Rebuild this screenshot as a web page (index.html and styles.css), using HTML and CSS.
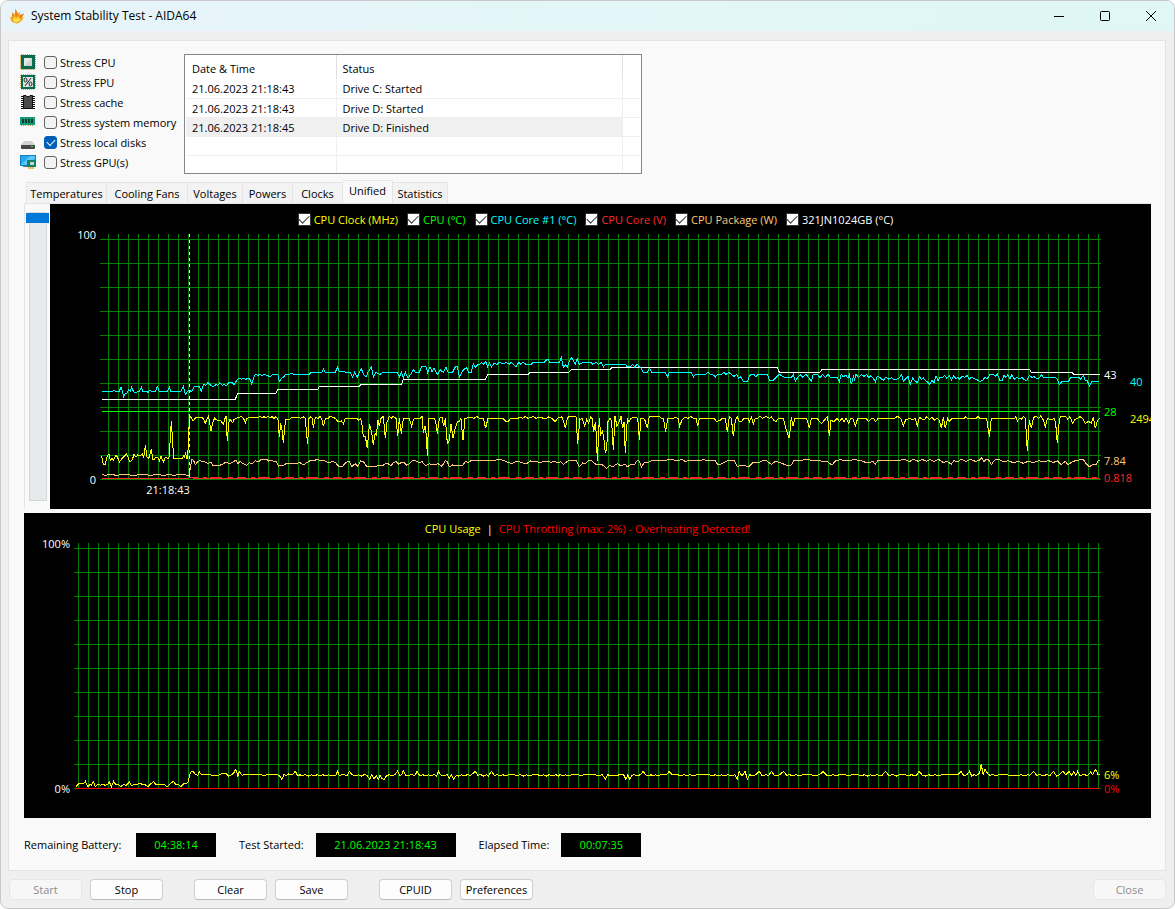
FILE: index.html
```html
<!DOCTYPE html>
<html lang="en">
<head>
<meta charset="utf-8">
<title>System Stability Test - AIDA64</title>
<link rel="stylesheet" href="styles.css">
</head>
<body>
<div class="window">
  <header class="titlebar">
    <svg class="app-icon" viewBox="0 0 16 16" aria-hidden="true">
      <path fill="#f9a51a" d="M5.500 15 C2 14 1 11 1.500 8.500 L3.500 9.500 L2.800 4 L5.500 6.800 L6.500 1 L9 6 L11 3.500 L11 7 L15 5.500 L13.200 9 L14.500 10 C13 13 10 15.500 7.500 15.500 Z"/>
      <path fill="#ef7d1a" d="M6.500 1 L9 6 L8 9 L6 6.500 Z M15 5.500 L13.200 9 L10 10.500 L11 7 Z M2.800 4 L5 7.500 L4.500 10 L3.500 9.500 Z"/>
      <path fill="#ffe04a" d="M5 14 C3.500 12 4 10.500 5.500 8.500 L7 11 L10 8.500 L10 11 L12 10.500 C11 13 8.500 14.500 6.500 14.500 Z"/>
    </svg>
    <h1 class="title">System Stability Test - AIDA64</h1>
    <div class="window-controls">
      <button class="winbtn" aria-label="Minimize"><svg viewBox="0 0 12 12"><path d="M1 6.500H11"/></svg></button>
      <button class="winbtn" aria-label="Maximize"><svg viewBox="0 0 12 12"><rect x="1.500" y="1.500" width="9" height="9" rx="1"/></svg></button>
      <button class="winbtn" aria-label="Close window"><svg viewBox="0 0 12 12"><path d="M1 1L11 11M11 1L1 11"/></svg></button>
    </div>
  </header>

  <main class="panel">
    <div class="setup">
      <div class="stress">
        <div class="stress-row">
          <svg class="icon" viewBox="0 0 16 16"><rect x="1" y="1" width="14" height="14" fill="#0b6b50" stroke="#d9a94a" stroke-width="1" stroke-dasharray="1 1"/><rect x="1" y="1" width="14" height="14" fill="#0b6b50"/><path d="M1 0.500H15M1 15.500H15M0.500 1V15M15.500 1V15" stroke="#d9a94a" stroke-dasharray="1 1"/><rect x="4" y="4" width="8" height="8" fill="#e4e8e6"/><path d="M4 12L12 4V12Z" fill="#cfd4d2"/></svg>
          <input class="check" type="checkbox" id="s1"><label for="s1">Stress CPU</label>
        </div>
        <div class="stress-row">
          <svg class="icon" viewBox="0 0 16 16"><rect x="1" y="1" width="14" height="14" fill="#0b6b50"/><path d="M1 0.500H15M1 15.500H15M0.500 1V15M15.500 1V15" stroke="#d9a94a" stroke-dasharray="1 1"/><rect x="3" y="3" width="10" height="10" fill="#dfe5e2"/><path d="M11 4L5 12" stroke="#222" stroke-width="1"/><ellipse cx="5.500" cy="6" rx="1.500" ry="2" fill="none" stroke="#222"/><ellipse cx="10.500" cy="10" rx="1.500" ry="2" fill="none" stroke="#222"/></svg>
          <input class="check" type="checkbox" id="s2"><label for="s2">Stress FPU</label>
        </div>
        <div class="stress-row">
          <svg class="icon" viewBox="0 0 16 16"><path d="M1 2.500H15M1 4.500H15M1 6.500H15M1 8.500H15M1 10.500H15M1 12.500H15M1 14.500H15" stroke="#111"/><path d="M3.500 1.500H6L7 2.500H9L10 1.500H12.500V14.500H3.500Z" fill="#4b4b4b" stroke="#111"/></svg>
          <input class="check" type="checkbox" id="s3"><label for="s3">Stress cache</label>
        </div>
        <div class="stress-row">
          <svg class="icon" viewBox="0 0 16 16"><path d="M0 3H15V11H0Z" fill="#149a76"/><path d="M2 5H4V9H2ZM5 5H7V9H5ZM8 5H10V9H8ZM11 5H13V9H11Z" fill="#173a30"/><path d="M1 11.500H7M8 11.500H14" stroke="#b69a3f" stroke-width="1" stroke-dasharray="1 1"/></svg>
          <input class="check" type="checkbox" id="s4"><label for="s4">Stress system memory</label>
        </div>
        <div class="stress-row">
          <svg class="icon" viewBox="0 0 16 16"><path d="M4 7H12L15 11H1Z" fill="#d2d2d2"/><path d="M1 11H15V14Q15 15 14 15H2Q1 15 1 14Z" fill="#474747"/><rect x="11" y="12" width="2" height="1" fill="#42e04a"/></svg>
          <input class="check" type="checkbox" id="s5" checked><label for="s5">Stress local disks</label>
        </div>
        <div class="stress-row">
          <svg class="icon" viewBox="0 0 16 16"><rect x="0.500" y="1.500" width="15" height="10" fill="#2aa9ea" stroke="#0e7fc0"/><path d="M1 11L10 2H15V4L8 11Z" fill="#5cc8f7"/><path d="M3 13H8V12H3Z" fill="#56747f"/><rect x="7" y="6" width="9" height="7" fill="#128267"/><rect x="10" y="8" width="4" height="3" fill="#c5d6cf"/><path d="M9 13V15M11 13V15M13 13V15" stroke="#f0a52a" stroke-width="1.500"/></svg>
          <input class="check" type="checkbox" id="s6"><label for="s6">Stress GPU(s)</label>
        </div>
      </div>

      <div class="log">
        <table>
          <thead><tr><th class="col-date">Date &amp; Time</th><th class="col-status">Status</th><th></th></tr></thead>
          <tbody>
            <tr><td>21.06.2023 21:18:43</td><td>Drive C: Started</td><td></td></tr>
            <tr><td>21.06.2023 21:18:43</td><td>Drive D: Started</td><td></td></tr>
            <tr class="selected"><td>21.06.2023 21:18:45</td><td>Drive D: Finished</td><td></td></tr>
            <tr><td></td><td></td><td></td></tr>
            <tr><td></td><td></td><td></td></tr>
          </tbody>
        </table>
      </div>
    </div>

    <nav class="tabs" role="tablist">
      <button class="tab large" role="tab">Temperatures</button>
      <button class="tab large" role="tab">Cooling Fans</button>
      <button class="tab medium" role="tab">Voltages</button>
      <button class="tab" role="tab">Powers</button>
      <button class="tab" role="tab">Clocks</button>
      <button class="tab active" role="tab" aria-selected="true">Unified</button>
      <button class="tab medium" role="tab">Statistics</button>
    </nav>

    <section class="tabpage">
      <div class="slider"><input class="range" type="range" min="0" max="100" value="0" aria-label="Graph scale"></div>
      <div class="graph">
        <div class="legend">
          <label class="yellow"><input class="square" type="checkbox" checked>CPU Clock (MHz)</label>
          <label class="green"><input class="square" type="checkbox" checked>CPU (°C)</label>
          <label class="cyan"><input class="square" type="checkbox" checked>CPU Core #1 (°C)</label>
          <label class="red"><input class="square" type="checkbox" checked>CPU Core (V)</label>
          <label class="peach"><input class="square" type="checkbox" checked>CPU Package (W)</label>
          <label class="white"><input class="square" type="checkbox" checked>321JN1024GB (°C)</label>
        </div>
        <svg class="plot" viewBox="50 230 1101 279" role="img" aria-label="Sensor graph">
          <defs>
            <pattern id="cols" x="108" y="0" width="10" height="10" patternUnits="userSpaceOnUse"><rect width="1" height="10" fill="#008000"/></pattern>
            <pattern id="rows" x="0" y="239" width="24" height="24" patternUnits="userSpaceOnUse"><rect width="24" height="1" fill="#008000"/></pattern>
          </defs>
          <rect x="102" y="234" width="998" height="246" fill="url(#cols)"/>
          <rect x="100" y="239" width="1001" height="241" fill="url(#rows)"/>
          <path class="trace lime" d="M102 411.500H1100"/>
          <path class="trace crimson" d="M102 478.500H189M193 478.500H1100"/>
          <path class="trace crimson" stroke-dasharray="9 5 4 3 12 6 5 4" d="M189 477.500H1100"/>
          <g transform="translate(100 370) scale(.33333)">
            <polyline class="trace peachline" points="6,314 18,316 30,313 50,316 70,313 100,316 130,313 150,316 175,313 190,317 205,313 220,316 245,313 264,316 268,318 272,285 276,268 281,272 286,284 294,274 300,272 316,276 324,280 332,276 338,286 354,288 364,284 372,280 378,276 388,282 400,276 408,270 414,282 420,274 428,280 440,286 448,278 456,282 466,272 476,276 484,268 500,268 506,274 514,270 522,274 530,276 536,288 550,286 560,280 580,282 600,278"/>
            <polyline class="trace yellowline" points="5,258 10,285 15,285 22,258 27,252 31,272 36,265 40,272 47,256 52,260 58,276 64,268 72,260 79,252 84,262 90,276 97,270 102,252 108,262 113,254 120,258 127,252 131,262 136,226 141,262 146,266 150,252 154,236 158,268 163,268 167,262 174,264 178,272 183,258 190,276 196,262 204,266 208,258 211,202 214,152 217,202 221,266 246,266 250,258 253,262 257,250 261,266 264,240 266,200 268,146 272,140 276,148 280,152 286,144 308,144 312,150 316,160 322,144 326,138 329,160 333,184 338,158 344,144 350,150 356,152 362,150 366,158 370,162 374,148 378,138 380,180 382,212 386,160 390,148 398,158 402,148 410,144 424,140 430,144 436,158 440,146 448,142 456,144 474,144 480,138 486,144 492,140 498,144 504,138 510,144 516,140 522,146 528,140 534,150 538,200 542,160 546,180 550,220 554,170 558,148 566,150 574,144 600,144"/>
            <polyline class="trace whiteline" points="6,88 406,88 412,72 527,72 533,58 600,58"/>
            <polyline class="trace cyanline" points="6,64 38,64 42,60 46,64 58,64 63,50 67,64 71,80 76,70 80,72 86,60 91,64 95,52 100,64 106,68 118,64 124,52 128,64 140,64 144,68 148,60 156,64 166,64 172,50 178,64 202,64 208,52 212,64 242,64 250,50 256,74 262,64 268,62 275,64 283,50 299,50 304,64 310,44 318,46 324,38 330,44 340,50 348,44 354,46 360,38 366,46 372,44 380,46 386,38 396,36 402,44 412,28 418,24 424,28 430,24 438,28 444,24 450,28 455,42 460,26 466,14 474,16 480,12 486,18 492,12 510,20 518,14 534,14 538,34 544,26 550,22 556,14 566,14 574,10 582,14 600,14"/>
          </g>
          <g transform="translate(260 205) scale(.33333)">
            <polyline class="trace peachline" points="120,773 130,780 142,772 152,766 162,768 172,762 184,768 196,768 206,774 216,770 226,772 236,784 248,784 256,774 266,768 276,784 286,776 294,784 302,768 310,770 320,784 334,784 346,786 356,780 368,782 378,774 388,778 394,782 400,772 408,770 416,778 424,772 432,772 440,780 448,776 456,768 468,768 478,774 486,770 496,782 508,776 520,780 534,776 546,784 556,766 562,770 568,786 578,780 596,782 608,782 616,770 626,772 634,766 684,766 700,768 716,762 734,768 744,772 756,776 772,768 788,774 800,776 812,768 840,772 860,768 872,772 884,768 894,774 902,770 910,778 924,768 950,768 956,782 960,784"/>
            <polyline class="trace yellowline" points="120,640 130,636 136,640 140,690 143,716 147,640 152,636 157,640 160,668 166,636 174,640 180,634 186,645 190,664 196,640 204,640 210,634 226,640 234,650 244,648 250,656 256,640 290,640 296,646 302,640 306,660 310,694 316,694 322,730 328,660 332,668 336,690 340,720 345,686 349,690 354,646 358,664 363,640 370,634 376,700 381,652 388,634 394,640 400,634 408,640 413,694 418,640 424,686 430,640 448,640 455,664 460,644 466,640 480,640 486,634 490,684 495,664 499,690 502,752 506,640 522,640 527,650 532,686 538,640 546,636 551,664 556,640 562,716 568,706 573,656 579,700 586,668 592,650 598,650 603,640 609,706 615,640 626,638 634,636 642,640 650,634 658,640 670,640 677,670 684,640 728,640 738,650 746,648 752,640 774,640 780,636 788,640 796,634 804,640 812,638 820,634 828,640 840,636 850,640 860,640 866,636 876,640 886,650 892,640 904,636 908,640 916,670 922,640 928,634 948,634 953,716 960,640"/>
            <polyline class="trace whiteline" points="120,553 174,553 178,544 298,544 304,538 424,538 430,523 676,523 684,508 804,508 810,502 928,502"/>
            <polyline class="trace cyanline" points="120,508 148,508 154,502 186,502 191,492 196,502 226,502 232,486 238,500 270,502 278,516 284,502 292,516 298,502 304,492 311,508 318,516 324,502 334,486 340,516 348,502 360,508 368,502 412,502 418,516 424,502 430,520 436,502 444,520 452,508 460,494 466,502 478,502 484,486 498,486 503,502 510,486 516,500 522,490 528,502 534,508 540,494 550,502 558,486 564,502 578,502 586,486 592,486 598,516 606,500 614,492 620,488 626,502 634,502 640,476 646,486 654,478 660,478 664,472 670,478 678,470 683,486 688,474 694,486 702,476 712,478 718,472 730,476 738,472 748,478 754,472 762,480 768,486 776,472 782,478 788,472 798,478 814,478 820,472 852,472 858,466 864,462 870,472 898,472 904,458 910,486 916,480 922,486 930,464 936,458 942,470 946,478 952,458 956,478"/>
          </g>
          <g transform="translate(560 205) scale(.33333)">
            <polyline class="trace peachline" points="60,784 68,774 76,776 86,766 96,768 104,776 114,780 128,780 140,790 148,782 160,784 172,776 182,782 196,778 202,786 212,778 224,778 232,766 238,768 244,786 252,774 264,772 276,766 316,766 334,762 352,768 366,762 376,770 386,766 410,768 430,764 450,768 466,768 474,780 486,776 500,768 516,766 524,768 532,784 540,782 550,780 566,786 578,774 592,774 606,768 620,768 634,778 648,768 662,774 684,782 694,780 702,766 724,766 742,762 760,768 776,766 790,770 800,768 808,774 816,780 826,768 840,764 860,768 880,764 900,766 916,772 928,774 938,768 946,778 954,766 1004,766 1016,768 1030,762 1050,770"/>
            <polyline class="trace yellowline" points="60,645 66,640 74,664 80,644 86,654 92,636 96,640 101,680 106,650 109,690 112,768 118,640 122,690 127,680 131,694 136,745 140,732 144,650 150,640 155,650 160,736 165,634 171,664 178,650 183,634 188,670 192,650 196,745 202,640 207,650 213,640 230,636 235,656 238,706 243,640 250,640 255,646 262,670 268,634 298,634 304,640 310,640 317,680 323,640 340,640 346,636 354,640 359,664 366,644 376,636 384,640 392,634 400,640 408,640 413,664 418,640 462,640 470,650 480,646 486,640 496,640 502,680 508,636 514,640 520,694 526,645 532,636 538,650 545,650 551,640 564,640 568,650 574,636 580,656 586,640 592,640 600,634 608,640 618,634 628,640 634,636 642,646 648,650 655,640 670,640 676,664 682,684 688,700 694,636 699,664 705,640 740,640 748,670 754,640 772,640 778,650 785,656 792,646 798,640 803,634 808,694 813,646 822,650 832,640 838,650 846,640 852,650 858,640 866,656 872,640 878,640 886,664 893,640 918,640 926,650 934,640 940,640 947,650 954,640 1004,640 1012,634 1022,640 1030,664 1037,644 1050,640"/>
            <polyline class="trace whiteline" points="28,502 34,493 150,493 156,487 652,487 658,502 780,502 786,493 1050,493"/>
            <polyline class="trace cyanline" points="56,478 70,472 92,472 98,478 108,472 116,478 124,472 130,486 136,478 196,478 202,486 210,486 218,478 224,486 232,478 238,486 244,490 250,502 262,502 268,490 276,502 316,502 322,516 328,502 394,502 400,516 406,508 436,508 444,502 452,508 460,510 466,516 472,508 484,508 492,502 498,508 506,502 514,508 522,514 530,508 536,520 542,516 550,529 562,529 568,514 574,508 582,508 588,516 594,508 622,508 628,526 640,526 648,518 658,508 668,514 676,518 694,518 700,508 706,528 714,516 722,510 728,516 738,508 746,518 754,529 760,508 774,510 780,518 788,508 796,518 804,508 812,518 832,518 838,529 844,508 850,516 858,510 864,520 868,508 874,538 880,514 884,524 888,508 896,518 904,508 912,514 920,508 926,518 932,512 940,520 946,530 952,514 960,518 970,526 978,516 986,522 994,518 1002,524 1012,522 1018,518 1025,508 1030,528 1036,522 1044,514 1050,538"/>
          </g>
          <g transform="translate(850 340) scale(.33333)">
            <polyline class="trace peachline" points="180,364 190,358 205,364 216,358 230,364 240,358 252,364 266,358 280,368 290,364 304,372 312,362 322,366 334,358 348,364 360,358 376,364 388,362 394,352 402,364 408,358 416,360 424,374 434,360 448,358 460,366 474,362 490,368 506,364 520,370 534,364 550,368 566,362 580,366 596,362 610,368 622,362 634,374 646,364 654,374 666,366 676,362 700,358 708,370 718,380 728,374 738,374 744,362 749,360"/>
            <polyline class="trace yellowline" points="180,235 186,240 196,235 202,260 208,232 213,235 222,240 230,230 238,238 246,232 254,240 262,235 268,240 274,265 280,232 286,265 293,235 299,244 306,235 342,235 347,230 352,235 378,235 384,230 390,235 410,235 418,290 424,235 494,235 498,230 502,244 508,235 514,238 520,230 526,235 532,332 538,240 544,265 550,235 556,228 566,235 572,228 580,240 586,260 592,235 602,240 612,235 617,250 622,310 628,240 632,230 648,230 654,238 660,230 668,250 674,240 682,235 690,230 698,235 706,250 716,244 724,250 730,230 736,265 742,244 748,235"/>
            <polyline class="trace whiteline" points="180,88 538,88 544,97 666,97 672,103 750,103"/>
            <polyline class="trace cyanline" points="180,134 188,114 194,122 202,128 208,110 214,118 220,114 226,122 232,124 238,134 246,122 252,128 258,108 264,122 270,112 276,114 284,106 290,114 298,108 304,120 310,108 318,116 324,112 330,118 336,108 344,112 352,106 358,118 364,112 372,116 380,118 388,124 398,122 404,112 412,116 420,104 430,104 436,108 442,102 450,122 456,122 462,106 468,112 474,104 480,118 485,104 492,118 500,112 508,116 516,112 522,118 530,122 538,106 546,112 552,110 560,116 568,114 575,104 580,112 616,112 622,118 628,134 636,124 656,124 662,112 686,112 692,118 700,106 706,122 712,122 718,138 726,124 748,124"/>
          </g>
          <path class="trace whiteline" stroke-dasharray="3 3" d="M189.500 234V480"/>
          <g class="labels">
            <text class="end white" x="96" y="239">100</text>
            <text class="end white" x="96" y="484">0</text>
            <text class="mid white" x="168" y="494">21:18:43</text>
            <text class="white" x="1104" y="379">43</text>
            <text class="cyan" x="1130" y="386">40</text>
            <text class="green" x="1104" y="416">28</text>
            <text class="yellow" x="1130" y="423">2494</text>
            <text class="peach" x="1104" y="465">7.84</text>
            <text class="red" x="1104" y="482">0.818</text>
          </g>
        </svg>
      </div>
    </section>

    <section class="graph usage">
      <h2 class="legend usage-title"><span class="yellow">CPU Usage</span><span class="white">|</span><span class="pure-red">CPU Throttling (max: 2%) - Overheating Detected!</span></h2>
      <svg class="plot" viewBox="24 539 1127 279" role="img" aria-label="CPU usage graph">
        <defs>
          <pattern id="cols2" x="78" y="0" width="10" height="10" patternUnits="userSpaceOnUse"><rect width="1" height="10" fill="#008000"/></pattern>
          <pattern id="rows2" x="0" y="548" width="24" height="24" patternUnits="userSpaceOnUse"><rect width="24" height="1" fill="#008000"/></pattern>
        </defs>
        <rect x="76" y="543" width="1024" height="246" fill="url(#cols2)"/>
        <rect x="74" y="548" width="1027" height="241" fill="url(#rows2)"/>
        <path class="trace redline" d="M76 788.500H1100"/>
        <g transform="translate(20 740) scale(.35714 .33333)">
          <polyline class="trace yellowline" points="157,140 164,132 178,132 183,124 190,140 196,134 200,136 205,124 211,140 218,132 226,136 232,132 238,136 246,134 250,126 256,140 262,124 268,134 274,132 282,140 290,134 298,136 306,126 312,136 330,132 340,132 350,134 358,140 366,132 374,124 380,134 404,134 412,140 420,132 430,124 436,134 444,134 450,140 458,132 464,132 470,128 474,110 478,96 484,93 492,104 498,106 502,95 508,104 532,104 540,108 554,108 562,102 578,102 584,108 592,104 598,100 604,88 610,108 614,95 622,106 632,102 640,104 676,104 684,108 690,104 720,104 726,106 733,118 739,104 745,106 752,102 762,104 771,94 778,108 784,104 790,108 798,104 808,108 816,104 824,108 832,104 840,108 848,104 856,108 864,104 872,108 884,106 889,94 894,106 904,104 916,106 922,94 930,104 940,108 948,104 956,108 964,104 972,106 979,118 985,104 991,116 998,108 1004,118 1008,106 1014,116 1020,118 1026,108 1034,104 1042,108 1050,104 1057,94 1063,106 1069,104 1073,92 1080,106 1086,108 1094,104 1106,106 1112,94 1120,108 1128,104 1136,108 1144,104 1150,108 1160,104 1166,108 1172,94 1180,108 1196,104 1202,116 1208,104 1214,118 1222,106 1228,108 1236,104 1244,108 1252,104 1262,106 1275,94 1282,106 1290,104 1298,108 1306,104 1312,108 1320,94 1328,106 1336,104 1344,108 1352,104 1360,108 1370,104 1384,104 1392,108 1400,104 1410,108 1418,104 1428,108 1436,104 1450,104 1458,108 1466,104 1474,108 1482,104 1490,108 1500,104 1508,108 1512,104"/>
        </g>
        <g transform="translate(560 740) scale(.39216 .33333)">
          <polyline class="trace yellowline" points="0,104 8,108 14,104 22,108 30,104 46,104 52,108 60,104 90,104 98,108 108,104 116,118 122,104 128,108 146,108 150,104 162,104 168,118 173,104 178,118 184,106 190,104 196,108 205,104 212,94 220,106 226,108 232,104 238,108 244,104 250,108 256,104 272,104 278,94 286,104 300,104 308,108 316,104 324,108 332,104 340,108 350,104 380,104 388,108 396,104 404,108 412,104 420,108 428,104 436,108 446,104 452,118 457,94 464,108 472,94 478,118 484,104 492,108 500,104 508,94 516,108 524,104 532,106 540,94 546,106 554,108 560,104 570,94 578,106 586,104 594,108 602,104 610,108 620,104 640,104 648,108 662,104 671,94 680,106 688,108 696,104 704,108 712,104 728,104 736,108 744,104 760,104 768,108 776,104 784,108 792,104 800,108 808,104 820,108 830,94 838,106 850,104 858,108 866,104 880,104 888,108 896,104 908,108 916,94 924,106 932,108 940,104 948,108 956,104 964,108 974,104 1014,104 1023,94 1030,108 1038,104 1044,94 1050,108 1056,104 1062,106 1070,100 1074,72 1079,104 1084,88 1090,100 1096,106 1104,104 1112,108 1118,104 1140,104 1150,108 1168,108 1176,104 1184,108 1192,104 1198,106 1207,94 1216,106 1224,104 1232,108 1240,104 1250,106 1258,94 1266,108 1274,104 1282,94 1290,104 1298,94 1304,106 1310,96 1315,106 1320,94 1326,108 1334,104 1346,106 1353,96 1358,104 1366,88 1372,104 1376,104"/>
        </g>
        <g class="labels">
          <text class="end white" x="70" y="548">100%</text>
          <text class="end white" x="70" y="793">0%</text>
          <text class="yellow" x="1104" y="779">6%</text>
          <text class="pure-red" x="1104" y="793">0%</text>
        </g>
      </svg>
    </section>

    <div class="status">
      <span class="wide-label">Remaining Battery:</span><output class="readout">04:38:14</output>
      <span>Test Started:</span><output class="readout wide">21.06.2023 21:18:43</output>
      <span>Elapsed Time:</span><output class="readout">00:07:35</output>
    </div>
  </main>

  <footer class="actions">
    <div class="group"><button class="btn" disabled>Start</button><button class="btn">Stop</button></div>
    <div class="group"><button class="btn">Clear</button><button class="btn">Save</button></div>
    <div class="group"><button class="btn">CPUID</button><button class="btn">Preferences</button></div>
    <button class="btn close" disabled>Close</button>
  </footer>
</div>
</body>
</html>
```
FILE: styles.css
```css
* { box-sizing: border-box; }
body {
  margin: 0;
  background: #fff;
  color: #000;
  font: 11px/16px "Open Sans", "Noto Sans", sans-serif;
}
button, input { font: inherit; color: inherit; margin: 0; }
.window {
  display: flex;
  flex-direction: column;
  min-height: 100vh;
  border: 1px solid #c8c8c8;
  border-radius: 8px;
  background: #efefef;
  overflow: hidden;
}
.titlebar {
  display: flex;
  align-items: center;
  height: 30px;
  padding-left: 8px;
  background: linear-gradient(90deg, #e8f4fa, #dff7f6);
}
.app-icon { width: 16px; height: 16px; margin-right: 6px; }
.title { flex: 1; margin: 0; font-size: 12px; font-weight: 400; }
.window-controls { display: flex; }
.winbtn {
  display: grid;
  place-items: center;
  width: 46px;
  height: 28px;
  padding: 0;
  border: 0;
  background: none;
}
.winbtn svg { width: 12px; height: 12px; fill: none; stroke: #000; }

.panel {
  flex: 1;
  margin: 9px 8px 0 7px;
  padding: 13px 14px 12px 15px;
  border: 1px solid #e3e3e3;
  background: #f9f9f9;
}
.setup { display: flex; align-items: flex-start; }
.stress { flex: none; width: 164px; margin-left: -4px; }
.stress-row {
  display: flex;
  align-items: center;
  height: 20px;
  white-space: nowrap;
}
.stress-row:first-child { margin-top: -1px; }
.icon { flex: none; width: 16px; height: 16px; margin: 0 8px 3px 0; }
.check {
  flex: none;
  appearance: none;
  display: grid;
  place-items: center;
  width: 13px;
  height: 13px;
  margin: 0 3px 2px 0;
  border: 1px solid #616161;
  border-radius: 3px;
  background: #f3f3f3;
}
.check:checked { border-color: #005fb8; background: #005fb8; }
.check:checked::before {
  content: "";
  width: 7px;
  height: 4px;
  margin-bottom: 2px;
  border: solid #fff;
  border-width: 0 0 1px 1px;
  transform: rotate(-45deg);
}

.log {
  width: 458px;
  height: 120px;
  padding: 0 1px;
  border: 1px solid #828790;
  background: #fff;
  overflow: hidden;
}
.log table { width: 100%; border-collapse: collapse; table-layout: fixed; }
.log th {
  height: 24px;
  padding: 3px 6px 0;
  border-right: 1px solid #e0e0e0;
  text-align: left;
  font-weight: 400;
}
.log th:last-child { border-right: 0; }
.col-date { width: 150px; }
.col-status { width: 286px; }
.log td {
  height: 19px;
  padding: 2px 6px 0;
  border-right: 1px solid #efefef;
  border-bottom: 1px solid #efefef;
  line-height: 16px;
}
.log td:last-child { border-right: 0; }
.selected td:not(:last-child) { background: #f0f0f0; }

.tabs { display: flex; align-items: flex-end; height: 29px; padding-left: 2px; }
.tab {
  width: 50px;
  height: 21px;
  padding: 0;
  border: 1px solid #e5e5e5;
  border-width: 1px 1px 0 0;
  background: #f3f3f3;
  line-height: 19px;
}
.tab.large { width: 81px; }
.tab.medium { width: 55px; }
.tab:first-child { border-left-width: 1px; }
.tab.active { height: 23px; padding-bottom: 3px; background: #f9f9f9; }

.tabpage {
  display: flex;
  align-items: flex-start;
  border-top: 1px solid #e5e5e5;
  margin-bottom: 4px;
}
.slider {
  width: 26px;
  padding: 8px 1px;
  border-left: 1px solid #e5e5e5;
}
.range {
  display: block;
  appearance: none;
  writing-mode: vertical-lr;
  width: 23px;
  height: 289px;
  background: none;
}
.range::-webkit-slider-runnable-track {
  width: 18px;
  border: 1px solid #d6d6d6;
  background: #e7eaea;
}
.range::-webkit-slider-thumb {
  appearance: none;
  width: 23px;
  height: 10px;
  margin-left: -4px;
  background: #0078d7;
}
.graph { flex: 1; min-width: 0; background: #000; }
.legend {
  display: flex;
  justify-content: center;
  align-items: center;
  gap: 9px;
  height: 26px;
  margin: 0;
  padding: 5px 10px 0 0;
  font-size: 11px;
  font-weight: 400;
  white-space: nowrap;
}
.legend label { display: flex; align-items: center; gap: 3px; }
.usage-title { gap: 6px; padding: 5px 0 0; }
.square {
  appearance: none;
  display: grid;
  place-items: center;
  width: 13px;
  height: 13px;
  border: 1px solid #333;
  background: #fff;
}
.square:checked::before {
  content: "";
  width: 9px;
  height: 5px;
  margin-bottom: 3px;
  border: solid #333;
  border-width: 0 0 1px 1px;
  transform: rotate(-45deg);
}
.plot { display: block; width: 100%; height: auto; }
.trace {
  fill: none;
  stroke-width: 1px;
  vector-effect: non-scaling-stroke;
  shape-rendering: crispEdges;
}
.lime { stroke: #0f0; }
.crimson { stroke: #ff2828; }
.redline { stroke: #f00; }
.yellowline { stroke: #ff0; }
.cyanline { stroke: #0ff; }
.whiteline { stroke: #fff; }
.peachline { stroke: #ffc878; }
.labels { font-size: 11px; }
.end { text-anchor: end; }
.mid { text-anchor: middle; }
.white { color: #fff; fill: #fff; }
.yellow { color: #ff0; fill: #ff0; }
.green { color: #0f0; fill: #0f0; }
.cyan { color: #0ff; fill: #0ff; }
.red { color: #ff2828; fill: #ff2828; }
.pure-red { color: #f00; fill: #f00; }
.peach { color: #ffc878; fill: #ffc878; }

.status { display: flex; align-items: center; gap: 12px; margin-top: 15px; }
.wide-label { min-width: 100px; }
.readout {
  width: 80px;
  height: 24px;
  margin-right: 11px;
  background: #000;
  color: #0f0;
  line-height: 23px;
  text-align: center;
}
.readout.wide { width: 140px; }

.actions { display: flex; gap: 31px; padding: 8px; }
.group { display: flex; gap: 8px; }
.btn {
  width: 73px;
  height: 21px;
  padding: 0;
  border: 1px solid #d0d0d0;
  border-bottom-color: #bcbcbc;
  border-radius: 4px;
  background: #fdfdfd;
  line-height: 18px;
}
.btn:disabled { border-color: #e6e6e6; background: #f7f7f7; color: #8c8c8c; }
.close { margin-left: auto; }
```
